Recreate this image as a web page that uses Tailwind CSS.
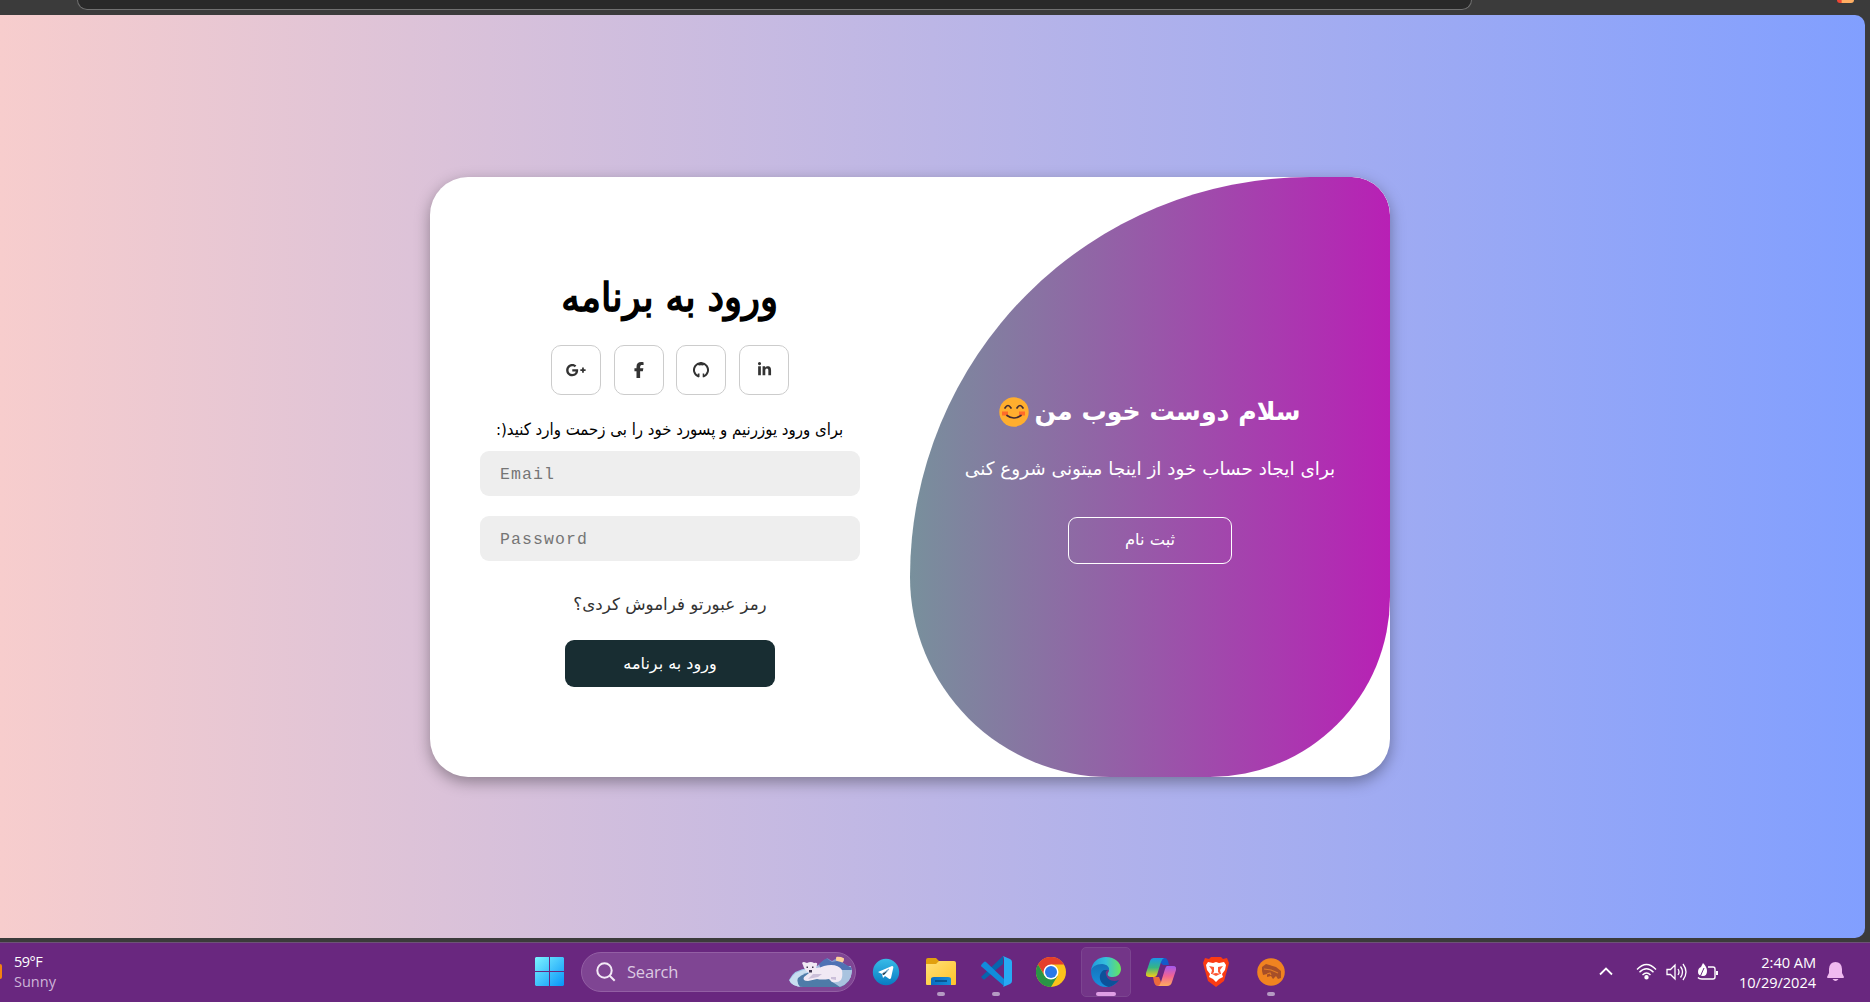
<!DOCTYPE html>
<html lang="fa">
<head>
<meta charset="utf-8">
<title>Login</title>
<script src="https://cdn.jsdelivr.net/npm/@tailwindcss/browser@4"></script>
</head>
<body class="w-[1870px] h-[1002px] overflow-hidden bg-[#3b3b3b] flex flex-col">
<header class="h-[15px] shrink-0 flex justify-between overflow-hidden">
  <div class="ml-[77px] w-[1395px] h-[10px] rounded-b-[18px] bg-[#292929] border border-t-0 border-[#707070]"></div>
  <div class="mr-4 w-[17px] h-[3px] rounded-b-lg bg-linear-to-r from-[#ef4634] from-25% to-[#ffae62] to-30%"></div>
</header>

<main class="h-[923px] w-[1865px] shrink-0 rounded-r-[10px] bg-linear-to-r/srgb from-[#f7cdcd] to-[#819fff] flex justify-center pt-[162px] pr-[45px]">
  <section class="w-[960px] h-[600px] rounded-[38px] bg-white overflow-hidden flex shadow-[0_5px_15px_rgba(0,0,0,0.35)]">
    <div class="w-[480px] flex flex-col items-center px-[50px] pt-[89px]">
      <h1 dir="rtl" class="h-[62px] leading-[62px] text-[40px] scale-x-[0.93] font-normal [-webkit-text-stroke:1.6px_black] text-black whitespace-nowrap font-['DejaVu_Sans',sans-serif]">ورود به برنامه</h1>
      <div class="mt-[17px] flex gap-[12.7px] text-[#333]">
        <a class="size-[50px] rounded-[10px] border border-[#ccc] flex items-center justify-center"><svg class="h-[16px] w-[20px]" viewBox="0 0 640 512" fill="currentColor"><path d="M386 228c2 11 3 22 3 37 0 112-75 191-188 191C93 456 5 368 5 260S93 64 201 64c53 0 97 19 131 51l-53 51c-15-14-40-30-78-30-67 0-121 55-121 124s54 124 121 124c77 0 106-56 111-84H201v-72h185zm185 6h56v56h-56v56h-56v-56h-56v-56h56v-56h56v56z"/></svg></a>
        <a class="size-[50px] rounded-[10px] border border-[#ccc] flex items-center justify-center"><svg class="h-[16px] w-[10px]" viewBox="0 0 320 512" fill="currentColor"><path d="M80 299V512H196V299h86l18-98H196V167c0-52 20-72 73-72 16 0 30 0 37 1V8C292 4 256 0 236 0 129 0 80 51 80 160v41H14v98z"/></svg></a>
        <a class="size-[50px] rounded-[10px] border border-[#ccc] flex items-center justify-center"><svg class="size-[16px]" viewBox="0 0 16 16" fill="none" stroke="currentColor"><path stroke-width="2" d="M5.700 14.600A7 7 0 1 1 10.300 14.600"/><path fill="currentColor" stroke="none" d="M3 2.500q2 0 3 1 2-.5 4 0 1-1 3-1L8 .5zM4.800 11.500h1.700V15L5 15.200z M9.700 11.500h1.500V15l-1.500.200z"/><path stroke-width="1" d="M5.500 13.300q-1.500.4-2.300-1.300"/></svg></a>
        <a class="size-[50px] rounded-[10px] border border-[#ccc] flex items-center justify-center"><svg class="mb-px size-[15px]" viewBox="0 0 448 512" fill="currentColor"><path d="M100 448H7V149h93zM54 108a54 54 0 1 1 0-108 54 54 0 0 1 0 108m394 340h-93V302c0-34-1-79-48-79-49 0-56 38-56 77v148h-93V149h89v41h1c13-24 43-48 88-48 94 0 112 62 112 142z"/></svg></a>
      </div>
      <p dir="rtl" class="mt-[18px] h-[32px] leading-[32px] text-[16.7px] text-black whitespace-nowrap scale-x-[0.897] font-['DejaVu_Sans',sans-serif]">برای ورود یوزرنیم و پسورد خود را بی زحمت وارد کنید(:</p>
      <input type="email" placeholder="Email" class="mt-[6px] w-full h-[45px] shrink-0 rounded-[9px] bg-[#eee] px-5 pt-[2px] text-[16.5px] tracking-[1.1px] outline-none placeholder:text-[#757575] font-['Liberation_Mono',monospace]">
      <input type="password" placeholder="Password" class="mt-[20px] w-full h-[45px] shrink-0 rounded-[9px] bg-[#eee] px-5 pt-[2px] text-[16.5px] tracking-[1.1px] outline-none placeholder:text-[#757575] font-['Liberation_Mono',monospace]">
      <a dir="rtl" class="mt-[27px] h-[32px] leading-[32px] text-[16.7px] text-[#333] whitespace-nowrap font-['DejaVu_Sans',sans-serif]">رمز عبورتو فراموش کردی؟</a>
      <button dir="rtl" class="mt-[20px] w-[210px] h-[47px] rounded-[9px] bg-[#182d32] text-white text-[16px] font-['DejaVu_Sans',sans-serif]">ورود به برنامه</button>
    </div>
    <div class="w-[480px] rounded-tl-[400px] rounded-bl-[200px] rounded-br-[180px] rounded-tr-[38px] bg-linear-to-r/srgb from-[#78909c] to-[#b820b5] flex flex-col items-center pt-[208px] text-white">
      <h2 dir="rtl" class="h-[54px] flex items-center gap-[5px] text-[25.2px] font-bold whitespace-nowrap font-['DejaVu_Sans',sans-serif]"><span>سلام دوست خوب من</span>
        <svg class="size-[30px]" viewBox="0 0 30 30" fill="none"><circle cx="15" cy="15" r="14.700" fill="#ffae2e"/><path d="M3 14.500h6v4H3zM20 14.500h6v4h-6z" fill="#ff6b29"/><path d="M6 11q3-5 6 0M18 11q3-5 6 0M8 18.500q7 5 14 0" stroke="#402a32" stroke-width="1.700" stroke-linecap="round"/></svg></h2>
      <p dir="rtl" class="mt-[14px] h-[32px] leading-[32px] text-[18.4px] whitespace-nowrap font-['DejaVu_Sans',sans-serif]">برای ایجاد حساب خود از اینجا میتونی شروع کنی</p>
      <button dir="rtl" class="mt-[32px] w-[164px] h-[47px] rounded-[9px] border border-white text-[16.3px] font-['DejaVu_Sans',sans-serif]">ثبت نام</button>
    </div>
  </section>
</main>

<footer class="mt-[4px] h-[60px] shrink-0 bg-[#69277f] border-t border-[#6d5277] flex items-center pb-[2px] overflow-hidden text-white font-['Open_Sans','Noto_Sans',sans-serif]">
  <div class="w-[522px] flex items-center">
    <div class="w-[2px] h-[15px] rounded-r-lg bg-[#f58310]"></div>
    <div class="ml-3 text-[14.500px] leading-[20px]"><div class="tracking-[-0.500px]">59°F</div><div class="text-[#cdb5d8]">Sunny</div></div>
  </div>
  <div class="w-[55px] flex justify-center"><svg class="size-[29px]" viewBox="0 0 29 29"><defs><linearGradient id="win" x1="0" y1="0" x2="1" y2="1" ><stop stop-color="#7cf3ff"/><stop offset="1" stop-color="#0794f8"/></linearGradient></defs><path fill="url(#win)" d="M1 0h13v14H0V1zM15 0h13l1 1v13H15zM0 15h14v14H1l-1-1zM15 15h14v13l-1 1H15z"/></svg></div>
  <div class="ml-1 w-[275px] h-10 shrink-0 rounded-full bg-[#7f4593] border border-[#935fa4] flex items-center">
    <svg class="ml-[14px] size-[20px]" viewBox="0 0 20 20" fill="none" stroke="#f3eaf6" stroke-width="2"><circle cx="8.500" cy="8.500" r="7.200"/><path d="m13.700 13.700 5 5"/></svg>
    <span class="ml-[11px] mt-px text-[16.500px] tracking-[-0.2px] text-[#dccae2]">Search</span>
    <svg class="ml-auto mr-[3px] w-[63px] h-[32px]" viewBox="0 0 63 32"><defs><clipPath id="sc"><path d="M0 24Q5 13 20 12L30 6Q40 0 52 1Q61 3 63 15Q62 27 51 31H14Q3 31 0 24z"/></clipPath><linearGradient id="sky" x1="0" y1="0" x2="0" y2="1"><stop stop-color="#6c8dca"/><stop offset="1" stop-color="#c3c5e4"/></linearGradient></defs><g clip-path="url(#sc)"><path fill="#9fc4e9" d="M0 10h63v22H0z"/><path fill="url(#sky)" d="M28 10 38 2l5 3 5-3 15 12H30z"/><circle cx="51" cy="3" r="4" fill="#ffd09b"/><path fill="#4f72b4" d="m30 8 7-6 6 4 5-1 4 1 11 6v2H32z"/><path fill="#c9def0" d="M0 25Q6 14 20 13L10 32H2z"/><path fill="#4e7ba8" d="M9 22q7-7 20-6 18 4 34 10v6H12q-5-5-3-10"/><path fill="#a9c3df" d="M46 14h17v12l-12 5-9-6z"/></g><path fill="#f1e9f4" d="M14 9q-2-3 1-3l3 1q4-2 7 0 4-1 3 2l-1 3q4 0 8-2 13-3 18 4 1 6-1 10-3 3-9 2l-3-3q-7 1-12 0l-9 2q-6 0-4-4l5-4q-5-3-6-8"/><path fill="#cbbfd9" d="m24 18 9 0-4 3-10 2zM42 21l5 0 0 3-5-1z"/><path fill="#423853" d="M17.500 10.500H19V12h-1.500zM23 10.500h1.500V12H23zM20 14h3v2.500h-3z"/></svg>
  </div>
  <nav class="ml-[5px] flex gap-[5px]">
    <div class="relative size-[50px] flex items-center justify-center"><svg class="size-[28px]" viewBox="0 0 28 28"><defs><linearGradient id="tg" x1="0" y1="0" x2="0" y2="1"><stop stop-color="#37bbe8"/><stop offset="1" stop-color="#087bc2"/></linearGradient></defs><circle cx="14" cy="14" r="13.200" fill="url(#tg)"/><path fill="#fff" d="m6 14 14-6q2 0 1 3l-2 9q-1 2-3 0l-3-2-2 2-1-4z"/><path stroke="#7bb8dd" d="m10 16 7-5-5 6"/></svg></div>
    <div class="relative size-[50px] flex items-center justify-center"><svg class="w-[30px] h-[28px]" viewBox="0 0 30 28"><defs><linearGradient id="fo" x1="0" y1="0" x2="1" y2="1"><stop stop-color="#ffe078"/><stop offset="1" stop-color="#ffc328"/></linearGradient><linearGradient id="fb" x1="0" y1="0" x2="1" y2="0"><stop stop-color="#0a6dc2"/><stop offset="1" stop-color="#168ed9"/></linearGradient></defs><path fill="#e1a00e" d="M0 2q0-2 2-2h8l3 3h15v5H0z"/><path fill="url(#fo)" d="M0 6h10l3-3h15q2 0 2 2v21q0 1-1 1H1q-1 0-1-1z"/><path fill="url(#fb)" d="M5 27v-6q0-2 3-2h14q3 0 3 2v6z"/><path stroke="#07477e" stroke-width="1.500" d="M9 23h12"/></svg><i class="absolute bottom-0 mb-px w-2 h-1 rounded-full bg-[#b59ac3]"></i></div>
    <div class="relative size-[50px] flex items-center justify-center"><svg class="size-[31px]" viewBox="0 0 31 31"><path fill="#0765ae" d="m1 20 21-20v8L4 23q-1 1-2 0l-2-2z"/><path fill="#118bdb" d="m1 8 2-2q1-1 2 0l18 17v7L1 11q-2-1 0-3"/><path fill="#27aaf4" d="m22 0 7 3q2 1 2 3v19q0 2-2 3l-7 3q1-1 1-3V4q0-3-1-4"/></svg><i class="absolute bottom-0 mb-px w-2 h-1 rounded-full bg-[#b59ac3]"></i></div>
    <div class="relative size-[50px] flex items-center justify-center"><svg class="size-[30px]" viewBox="0 0 30 30"><circle cx="15" cy="15" r="15" fill="#fbc31b"/><path fill="#e43e2c" d="M2 7.500a15 15 0 0 1 26 0H15L9 19z"/><path fill="#2a9546" d="M2 7.500A15 15 0 0 0 15 30l6.500-11L15 22 8.500 18.700z"/><circle cx="15" cy="15" r="7.500" fill="#fff"/><circle cx="15" cy="15" r="6" fill="#2a78e8"/></svg></div>
    <div class="relative size-[50px] rounded-[5px] bg-[#733588] border border-[#7c4590] flex items-center justify-center"><svg class="size-[30px]" viewBox="0 0 30 30"><defs><linearGradient id="e1"><stop stop-color="#2099dc"/><stop offset=".5" stop-color="#35c0dc"/><stop offset="1" stop-color="#68e45b"/></linearGradient><linearGradient id="e2" x1="0" y1="0" x2="0" y2="1"><stop stop-color="#1471b8"/><stop offset="1" stop-color="#1690df"/></linearGradient></defs><path fill="url(#e1)" d="M0 14C1 5 7 0 15 0c9 0 15 6 15 12 0 5-4 8-8 8-5 0-6-2-5-4 3-4-1-8-6-8C5 8 1 11 0 14"/><path fill="url(#e2)" d="M0 14c1-4 5-7 11-7 5 0 8 4 7 6-7-2-9 6-4 11 4 4 9 3 13 0-3 4-7 6-12 6C7 30 0 24 0 14"/><path fill="#0c5199" d="M13 13c-7 4-5 15 5 17 4-1 8-4 10-7-5 2-12 1-13-6-1-2 0-3 2-4z"/></svg><i class="absolute bottom-0 w-5 h-1 rounded-full bg-[#df9ee5]"></i></div>
    <div class="relative size-[50px] flex items-center justify-center"><svg class="w-[30px] h-[28px]" viewBox="0 0 30 28"><defs><linearGradient id="c1" x1="0" y1="0" x2="0" y2="1"><stop stop-color="#1a96e8"/><stop offset=".5" stop-color="#36b683"/><stop offset="1" stop-color="#f8cb16"/></linearGradient><linearGradient id="c2" x1="0" y1="0" x2="0" y2="1"><stop stop-color="#a358ef"/><stop offset=".5" stop-color="#f26393"/><stop offset="1" stop-color="#ffad5e"/></linearGradient></defs><path fill="#1559c9" d="M10 0h9q2 0 3 3l1 4h-6z"/><path fill="url(#c1)" d="M8 0h10q-2 1-3 4l-4 13q-1 2-3 2H3q-4 0-3-4L4 3q1-3 4-3"/><path fill="#ec693d" d="M7 19h6l2 5q1 4 4 4h-7q-3 0-4-4z"/><path fill="url(#c2)" d="M21 8h6q4 0 3 4l-4 12q-1 4-5 4h-9q2-1 3-4l4-13q1-3 2-3"/></svg></div>
    <div class="relative size-[50px] flex items-center justify-center"><svg class="w-[26px] h-[30px]" viewBox="0 0 26 30"><path fill="#fb3b12" d="m8 0-2 2-4-1L0 6l1 4 4 14 8 6 8-6 4-14 1-4-2-5-4 1-2-2z"/><path fill="#fff" d="m3 8 2-3 5 1 3-1 3 1 5-1 2 3-1 5-3 4 1 3-4 2-3 3-3-3-4-2 1-3-3-4z"/><path fill="#fb3b12" d="m6 9 5 1 0 5-2 2 4 2 4-2-2-2 0-5 5-1-3 4 1 4-5-1-5 1 1-4z" opacity=".85"/></svg></div>
    <div class="relative size-[50px] flex items-center justify-center"><svg class="size-[28px]" viewBox="0 0 28 28"><circle cx="14" cy="14" r="13.800" fill="#f08320"/><path fill="#a64e28" d="m5 9 4-3 10 3 5 4v7l-3 1-2-3-3 3-2-3-4 1v-3l-4 1-1-4z"/><path stroke="#e17b26" stroke-width="1.200" fill="none" d="m7 11 7 1 7 3M10 16l3-1 1 2"/></svg><i class="absolute bottom-0 mb-px w-2 h-1 rounded-full bg-[#b59ac3]"></i></div>
  </nav>
  <div class="ml-auto mr-[26px] flex items-center">
    <svg class="mr-[23px] w-[14px] h-[9px]" viewBox="0 0 14 9" fill="none" stroke="#fff" stroke-width="1.800"><path d="m1 7.500 6-6 6 6"/></svg>
    <svg class="mr-[9px] w-[21px] h-[17px]" viewBox="0 0 21 17" fill="none" stroke="#fff" stroke-width="1.400"><path d="M1 6.500q9.500-10 19 0M3.500 9.300q7-7 14 0M6.500 12q4-4 8 0"/><circle cx="10.500" cy="14.200" r="1.500" fill="#fff"/></svg>
    <svg class="mr-[9px] w-[22px] h-[18px]" viewBox="0 0 22 18" fill="none" stroke="#fff" stroke-width="1.300"><path d="M1 6.500h3.500L9 2v14l-4.500-4.500H1zM12 6q2 3 0 6M14.500 3.500q4 5.500 0 11M17 1q6 8 0 16"/></svg>
    <svg class="mr-[20px] w-[22px] h-[18px]" viewBox="0 0 22 18" fill="none" stroke="#fff" stroke-width="1.400"><path d="M11 4h5q2 0 2 2v8q0 2-2 2H5q-3 0-4-1.500"/><path d="M19 8h2v4h-2z" fill="#fff" stroke="none"/><path d="M6 0q4 4 4 8 0 5-4 5-5 0-5-4 0-4 3-5z" fill="#fff" stroke="none"/><path d="M7 5 3 14" stroke="#69277f" stroke-width="1"/></svg>
    <div class="text-right text-[14.6px] leading-[20px] whitespace-nowrap tracking-[-0.05px]"><div>2:40 AM</div><div>10/29/2024</div></div>
    <svg class="ml-[11px] w-[17px] h-[20px]" viewBox="0 0 17 20" fill="#f0baf0"><path d="M8.500 0q6 0 6.500 7v4l2 4q0 1-1 1H1q-1 0-1-1l2-4V7q.5-7 6.500-7M5.500 17h6q-3 4-6 0"/></svg>
  </div>
</footer>
</body>
</html>
